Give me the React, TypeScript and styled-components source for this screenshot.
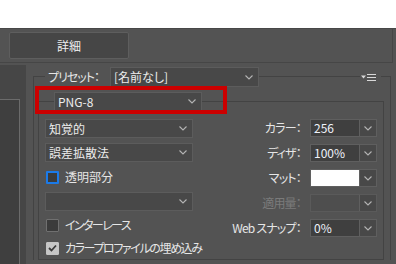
import React from 'react';
import styled, { createGlobalStyle } from 'styled-components';

const GlobalStyle = createGlobalStyle`
  html, body {
    margin: 0;
    padding: 0;
    background: #fff;
  }
  body {
    font-family: "Noto Sans CJK JP", "Liberation Sans", sans-serif;
    font-size: 12px;
    font-feature-settings: "palt";
    color: #e6e6e6;
  }
`;

const Screen = styled.div`
  position: relative;
  width: 396px;
  height: 264px;
  overflow: hidden;
  display: flex;
  flex-direction: column;
`;

const Blank = styled.div`
  flex: none;
  height: 28px;
  background: #fff;
`;

const Dialog = styled.div`
  flex: 1;
  display: flex;
  flex-direction: column;
  background: #535353;
  border-top: 1px solid #474747;
`;

const Header = styled.div`
  flex: none;
  height: 33px;
  display: flex;
  align-items: center;
  padding-left: 9px;
  margin-right: 3px;
  border-bottom: 1px solid #464646;
  border-right: 1px solid #464646;
`;

const DetailButton = styled.button`
  width: 120px;
  height: 27px;
  padding: 0;
  background: #464646;
  border: 1px solid #5e5e5e;
  border-radius: 2px;
  color: #f0f0f0;
  font: inherit;
  font-feature-settings: "palt";
`;

const Body = styled.div`
  flex: 1;
  display: flex;
  min-height: 0;
`;

const LeftPane = styled.div`
  flex: none;
  width: 26px;
  margin-top: 2px;
  background: #464646;
  display: flex;
  flex-direction: column;
`;

const PreviewFrame = styled.div`
  flex: 1;
  margin-top: 34px;
  width: 19px;
  background: #3f3f3f;
  border-top: 1px solid #6b6b6b;
  border-right: 1px solid #6b6b6b;
`;

const Settings = styled.div`
  flex: 1;
  padding: 4px 5px 0 7px;
`;

const FrameRow = styled.div<{ $h: number }>`
  display: flex;
  align-items: center;
  height: ${p => p.$h}px;
`;

const Corner = styled.div<{ $side: 'left' | 'right'; $w?: number; $drop: number }>`
  align-self: stretch;
  flex: ${p => (p.$w ? `none` : `1`)};
  width: ${p => (p.$w ? `${p.$w}px` : 'auto')};
  margin-top: ${p => p.$drop}px;
  border-top: 1px solid #434343;
  border-${p => p.$side}: 1px solid #434343;
`;

const Line = styled.div`
  flex: 1;
  align-self: stretch;
  margin-top: 9px;
  border-top: 1px solid #434343;
`;

const Label = styled.span<{ $ml?: number; $dim?: boolean; $ls?: number }>`
  margin-left: ${p => p.$ml ?? 0}px;
  color: ${p => (p.$dim ? '#7b7b7b' : '#e6e6e6')};
  letter-spacing: ${p => p.$ls ?? 0}px;
  white-space: nowrap;
  line-height: 1;
`;

const Select = styled.div<{ $w: number; $h?: number; $ml?: number }>`
  flex: none;
  box-sizing: border-box;
  width: ${p => p.$w}px;
  height: ${p => p.$h ?? 19}px;
  margin-left: ${p => p.$ml ?? 0}px;
  display: flex;
  align-items: center;
  justify-content: space-between;
  padding: 0 5px 0 3px;
  background: #484848;
  border: 1px solid #5c5c5c;
  color: #ececec;
  line-height: 1;
`;

const MenuIcon = styled.svg`
  flex: none;
  margin: 0 5px 0 1px;
`;

const OuterBody = styled.div`
  border-left: 1px solid #434343;
  border-right: 1px solid #434343;
  padding: 5px 6px 0 4px;
`;

const InnerBody = styled.div`
  height: 140px;
  border: 1px solid #434343;
  border-top: none;
  padding: 8px 6px 0 6px;
  display: flex;
  justify-content: space-between;
`;

const LeftCol = styled.div`
  display: flex;
  flex-direction: column;
  gap: 5px;
`;

const RightCol = styled.div`
  display: flex;
  flex-direction: column;
  align-items: flex-end;
  gap: 7px;
`;

const CheckRow = styled.div<{ $h: number }>`
  display: flex;
  align-items: center;
  gap: 6px;
  height: ${p => p.$h}px;
  padding-left: 1px;
`;

const Box = styled.div<{ $kind: 'focus' | 'off' | 'on' }>`
  box-sizing: border-box;
  width: 13px;
  height: 13px;
  display: flex;
  align-items: center;
  justify-content: center;
  border: ${p =>
    p.$kind === 'focus' ? '2px solid #1b7ae8' : p.$kind === 'on' ? '1px solid #c4c4c4' : '1px solid #707070'};
  background: ${p => (p.$kind === 'on' ? '#c6c6c6' : '#3b3b3b')};
  border-radius: 1px;
`;

const FieldRow = styled.div`
  display: flex;
  align-items: center;
  gap: 9px;
  height: 18px;
`;

const Combo = styled.div<{ $dim?: boolean }>`
  box-sizing: border-box;
  width: 67px;
  height: 18px;
  display: flex;
  border: 1px solid ${p => (p.$dim ? '#5a5a5a' : '#5f5f5f')};
`;

const ComboValue = styled.div<{ $fill?: string }>`
  flex: 1;
  display: flex;
  align-items: center;
  padding-left: 3px;
  background: ${p => p.$fill ?? '#3f3f3f'};
  color: #eef2fa;
  line-height: 1;
`;

const ComboArrow = styled.div`
  flex: none;
  width: 16px;
  display: flex;
  align-items: center;
  justify-content: center;
  background: #484848;
  border-left: 1px solid #5f5f5f;
`;

const Highlight = styled.div`
  position: absolute;
  left: 35px;
  top: 86px;
  width: 192px;
  height: 28px;
  box-sizing: border-box;
  border: 4px solid #cc0000;
  pointer-events: none;
`;

const Chevron = ({ color = '#b4b4b4' }: { color?: string }) => (
  <svg width="8" height="5" viewBox="0 0 8 5">
    <path d="M0.5 0.5 L4 4 L7.5 0.5" fill="none" stroke={color} strokeWidth="1.1" />
  </svg>
);

const Check = () => (
  <svg width="9" height="8" viewBox="0 0 9 8">
    <path d="M1 4 L3.5 6.5 L8 1.5" fill="none" stroke="#3a3a3a" strokeWidth="1.8" />
  </svg>
);

const fields = [
  { label: 'カラー：', value: '256' },
  { label: 'ディザ：', value: '100%' },
  { label: 'マット：', value: '', fill: '#ffffff' },
  { label: '適用量：', value: '', fill: '#4e4e4e', dim: true },
  { label: 'Web スナップ：', value: '0%' },
];

export default function App() {
  return (
    <Screen>
      <GlobalStyle />
      <Blank />
      <Dialog>
        <Header>
          <DetailButton type="button">詳細</DetailButton>
        </Header>
        <Body>
          <LeftPane>
            <PreviewFrame />
          </LeftPane>
          <Settings>
            <FrameRow $h={20}>
              <Corner $side="left" $w={11} $drop={9} />
              <Label $ml={3} $ls={-1}>プリセット：</Label>
              <Select $w={149} $h={20} $ml={11}>
                <span>[名前なし]</span>
                <Chevron />
              </Select>
              <Line />
              <MenuIcon width="15" height="7" viewBox="0 0 15 7">
                <path d="M0 1.5 H5 L2.5 4.5 Z" fill="#d8d8d8" />
                <path d="M6 0.5 H15 M6 3.5 H15 M6 6.5 H15" stroke="#d8d8d8" strokeWidth="1" />
              </MenuIcon>
              <Corner $side="right" $w={9} $drop={9} />
            </FrameRow>
            <OuterBody>
              <FrameRow $h={19}>
                <Corner $side="left" $w={15} $drop={9} />
                <Select $w={148}>
                  <span>PNG-8</span>
                  <Chevron />
                </Select>
                <Corner $side="right" $drop={9} />
              </FrameRow>
              <InnerBody>
                <LeftCol>
                  <Select $w={148}>
                    <span>知覚的</span>
                    <Chevron />
                  </Select>
                  <Select $w={148}>
                    <span>誤差拡散法</span>
                    <Chevron />
                  </Select>
                  <CheckRow $h={20}>
                    <Box $kind="focus" />
                    <Label>透明部分</Label>
                  </CheckRow>
                  <Select $w={148}>
                    <span />
                    <Chevron />
                  </Select>
                  <CheckRow $h={18}>
                    <Box $kind="off" />
                    <Label $ls={-1.6}>インターレース</Label>
                  </CheckRow>
                  <CheckRow $h={18}>
                    <Box $kind="on">
                      <Check />
                    </Box>
                    <Label $ls={-1.4}>カラープロファイルの埋め込み</Label>
                  </CheckRow>
                </LeftCol>
                <RightCol>
                  {fields.map(f => (
                    <FieldRow key={f.label}>
                      <Label $dim={f.dim} $ls={-0.8}>{f.label}</Label>
                      <Combo $dim={f.dim}>
                        <ComboValue $fill={f.fill}>{f.value}</ComboValue>
                        <ComboArrow>
                          <Chevron />
                        </ComboArrow>
                      </Combo>
                    </FieldRow>
                  ))}
                </RightCol>
              </InnerBody>
            </OuterBody>
          </Settings>
        </Body>
      </Dialog>
      <Highlight />
    </Screen>
  );
}
